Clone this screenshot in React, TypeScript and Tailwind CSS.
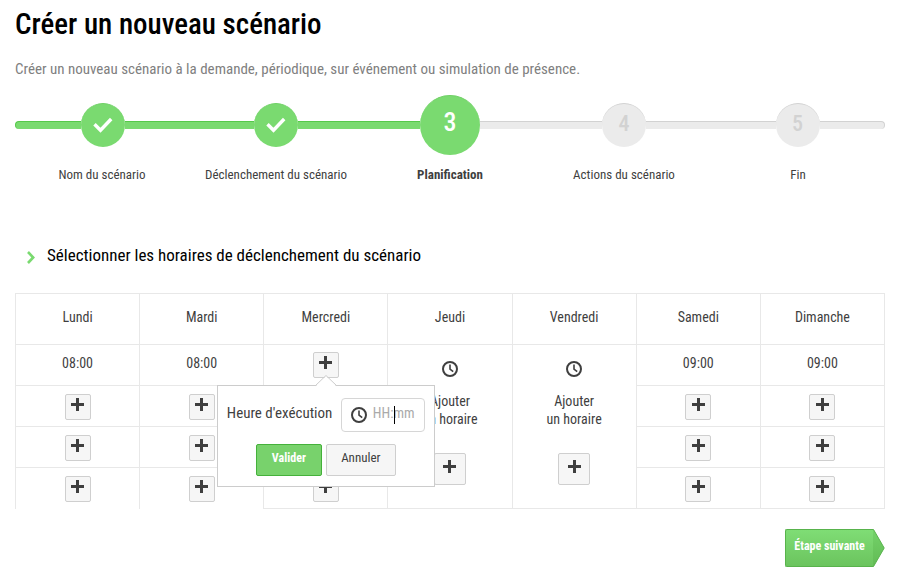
import React from 'react';

type StepStatus = 'done' | 'current' | 'todo';

interface Step {
  label: string;
  status: StepStatus;
}

interface Day {
  name: string;
  time?: string;
  empty?: boolean;
  open?: boolean;
}

const steps: Step[] = [
  { label: 'Nom du scénario', status: 'done' },
  { label: 'Déclenchement du scénario', status: 'done' },
  { label: 'Planification', status: 'current' },
  { label: 'Actions du scénario', status: 'todo' },
  { label: 'Fin', status: 'todo' },
];

const days: Day[] = [
  { name: 'Lundi', time: '08:00', open: true },
  { name: 'Mardi', time: '08:00', open: true },
  { name: 'Mercredi' },
  { name: 'Jeudi', empty: true },
  { name: 'Vendredi', empty: true },
  { name: 'Samedi', time: '09:00' },
  { name: 'Dimanche', time: '09:00' },
];

const barColors = {
  green: 'border-[#55c94a] bg-[#7ada70]',
  gray: 'border-[#d2d2d2] bg-[#ebebeb]',
};

const PlusIcon = () => (
  <svg width="13" height="13" viewBox="0 0 13 13" fill="#3f3f3f" aria-hidden="true">
    <path d="M5 0h3v5h5v3H8v5H5V8H0V5h5z" />
  </svg>
);

const ClockIcon = () => (
  <svg width="16" height="16" viewBox="0 0 16 16" fill="none" stroke="#3f3f3f" strokeWidth="2" aria-hidden="true">
    <circle cx="8" cy="8" r="7" />
    <path d="M8 3.5V8l3.2 2.6" strokeWidth="1.6" />
  </svg>
);

const AddButton: React.FC<{ day: string; large?: boolean }> = ({ day, large }) => (
  <button
    type="button"
    aria-label={`Ajouter un horaire, ${day}`}
    className={`flex justify-center rounded-xs border border-[#cfcfcf] bg-[#f6f6f6] hover:bg-gray-200 ${large ? 'size-8 pt-1.5' : 'size-[26px] pt-[3px]'}`}
  >
    <PlusIcon />
  </button>
);

const Stepper = () => (
  <ol className="grid grid-cols-5">
    {steps.map((step, index) => {
      const left = step.status === 'todo' ? barColors.gray : barColors.green;
      const right = step.status === 'done' ? barColors.green : barColors.gray;
      return (
        <li key={step.label} aria-current={step.status === 'current' ? 'step' : undefined}>
          <div className="flex h-[61px] items-center">
            <span className={`h-2 flex-1 border-t ${left} ${index === 0 ? 'rounded-l-sm border-l' : ''}`} />
            {step.status === 'done' && (
              <span className="flex size-11 items-center justify-center rounded-full border-t border-[#6fd065] bg-[#7ada70]">
                <svg width="20" height="16" viewBox="0 0 20 16" fill="none" stroke="#fff" strokeWidth="3.4" aria-hidden="true">
                  <path d="M1.5 7.2l6 6L18.2 2" />
                </svg>
              </span>
            )}
            {step.status === 'current' && (
              <span className="flex size-[60px] items-center justify-center rounded-full border-t border-[#6fd065] bg-[#7ada70] pb-1.5 text-[26px] font-medium text-white">
                {index + 1}
              </span>
            )}
            {step.status === 'todo' && (
              <span className="flex size-11 items-center justify-center rounded-full border-t border-[#d2d2d2] bg-[#ebebeb] pb-1 text-[22px] font-medium text-[#d2d2d2]">
                {index + 1}
              </span>
            )}
            <span className={`h-2 flex-1 border-t ${right} ${index === steps.length - 1 ? 'rounded-r-sm border-r' : ''}`} />
          </div>
          <p className={`mt-2.5 text-center text-[13px] leading-5 whitespace-nowrap ${step.status === 'current' ? 'font-bold' : ''}`}>
            {step.label}
          </p>
        </li>
      );
    })}
  </ol>
);

const TimePopover = () => (
  <form className="absolute top-full left-1/2 z-10 mt-[7px] w-[218px] -translate-x-1/2 border border-[#cccccc] bg-white px-[9px] pt-3 pb-2.5">
    <svg className="absolute -top-[11px] left-1/2 -translate-x-1/2" width="22" height="12" viewBox="0 0 22 12" aria-hidden="true">
      <path d="M0 12L11 1l11 11z" fill="#fff" />
      <path d="M0 11L11 0.5 22 11" fill="none" stroke="#cccccc" />
    </svg>
    <div className="flex items-center justify-between">
      <label htmlFor="execution-time" className="pb-1 text-[15px] whitespace-nowrap">Heure d'exécution</label>
      <div className="relative flex h-[34px] w-[84px] items-center gap-1.5 rounded-sm border border-[#d6d6d6] pl-[9px]">
        <ClockIcon />
        <input
          id="execution-time"
          type="text"
          placeholder="HH:mm"
          className="w-12 pb-1 text-[14px] outline-none placeholder:text-[#aaaaaa]"
        />
        <span className="absolute top-[7px] left-[52px] h-[18px] w-px bg-black" />
      </div>
    </div>
    <div className="mt-3 flex justify-center gap-1">
      <button type="submit" className="h-8 w-[66px] rounded-xs border border-[#45b13b] bg-[#78d26c] pb-1 text-[12px] font-bold text-white">
        Valider
      </button>
      <button type="button" className="h-8 w-[70px] rounded-xs border border-[#cfcfcf] bg-[#f6f6f6] pb-1 text-[13px]">
        Annuler
      </button>
    </div>
  </form>
);

const DayCell: React.FC<{ day: Day; row: number }> = ({ day, row }) => {
  if (day.empty) {
    if (row > 0) {
      return null;
    }
    return (
      <td rowSpan={4} className="border border-[#e8e8e8] p-0 align-top">
        <div className="flex flex-col items-center pt-4 leading-[18px]">
          <ClockIcon />
          <p className="mt-[15px] mb-[25px] text-center">
            Ajouter
            <br />
            un horaire
          </p>
          <AddButton day={day.name} large />
        </div>
      </td>
    );
  }
  if (row === 0) {
    return (
      <td className="border border-[#e8e8e8] p-0 text-center">
        {day.time ? (
          <span className="block pb-1">{day.time}</span>
        ) : (
          <div className="relative mx-auto w-fit">
            <AddButton day={day.name} />
            <TimePopover />
          </div>
        )}
      </td>
    );
  }
  return (
    <td className={`border border-[#e8e8e8] p-0 ${day.open && row === 3 ? 'border-b-0' : ''}`}>
      <div className="flex justify-center pt-0.5">
        <AddButton day={day.name} />
      </div>
    </td>
  );
};

const ScheduleTable = () => (
  <table className="mt-[26px] w-full table-fixed border-collapse text-[14px]">
    <thead>
      <tr className="h-[51px]">
        {days.map((day) => (
          <th key={day.name} scope="col" className="border border-[#e8e8e8] p-0 pb-1 font-normal">{day.name}</th>
        ))}
      </tr>
    </thead>
    <tbody>
      {[0, 1, 2, 3].map((row) => (
        <tr key={row} className="h-[41px]">
          {days.map((day) => (
            <DayCell key={day.name} day={day} row={row} />
          ))}
        </tr>
      ))}
    </tbody>
  </table>
);

const App = () => (
  <main className="bg-white pr-4 pl-[15px] font-['Liberation_Sans_Narrow','Roboto_Condensed','Liberation_Sans',sans-serif] text-[#3f3f3f]">
    <h1 className="pt-1.5 text-[29px] leading-9 font-medium text-black">Créer un nouveau scénario</h1>
    <p className="mt-[17px] mb-[15px] text-[15px] leading-5 text-[#808080]">
      Créer un nouveau scénario à la demande, périodique, sur événement ou simulation de présence.
    </p>
    <Stepper />
    <h2 className="mt-[58px] flex items-center gap-3 pl-3 text-[17px] leading-6 text-black">
      <svg className="mt-1" width="8" height="13" viewBox="0 0 8 13" fill="none" stroke="#7ada70" strokeWidth="2.6" aria-hidden="true">
        <path d="M1 1l5.2 5.5L1 12" />
      </svg>
      Sélectionner les horaires de déclenchement du scénario
    </h2>
    <ScheduleTable />
    <div className="mt-5 flex justify-end">
      <button type="button" className="flex h-[38px] text-[12px] font-bold text-white">
        <span className="h-full w-[88px] rounded-l-xs border border-r-0 border-[#58b34c] bg-linear-to-b from-[#7fdd75] to-[#6bc45e] pt-[7px] whitespace-nowrap">
          Étape suivante
        </span>
        <svg width="12" height="38" viewBox="0 0 12 38" aria-hidden="true">
          <defs>
            <linearGradient id="tip" x1="0" y1="0" x2="0" y2="1">
              <stop offset="0" stopColor="#74d269" />
              <stop offset="1" stopColor="#62bb55" />
            </linearGradient>
          </defs>
          <path d="M0 0.5h0.5L11.2 19 0.5 37.5H0" fill="url(#tip)" stroke="#58b34c" />
        </svg>
      </button>
    </div>
  </main>
);

export default App;
